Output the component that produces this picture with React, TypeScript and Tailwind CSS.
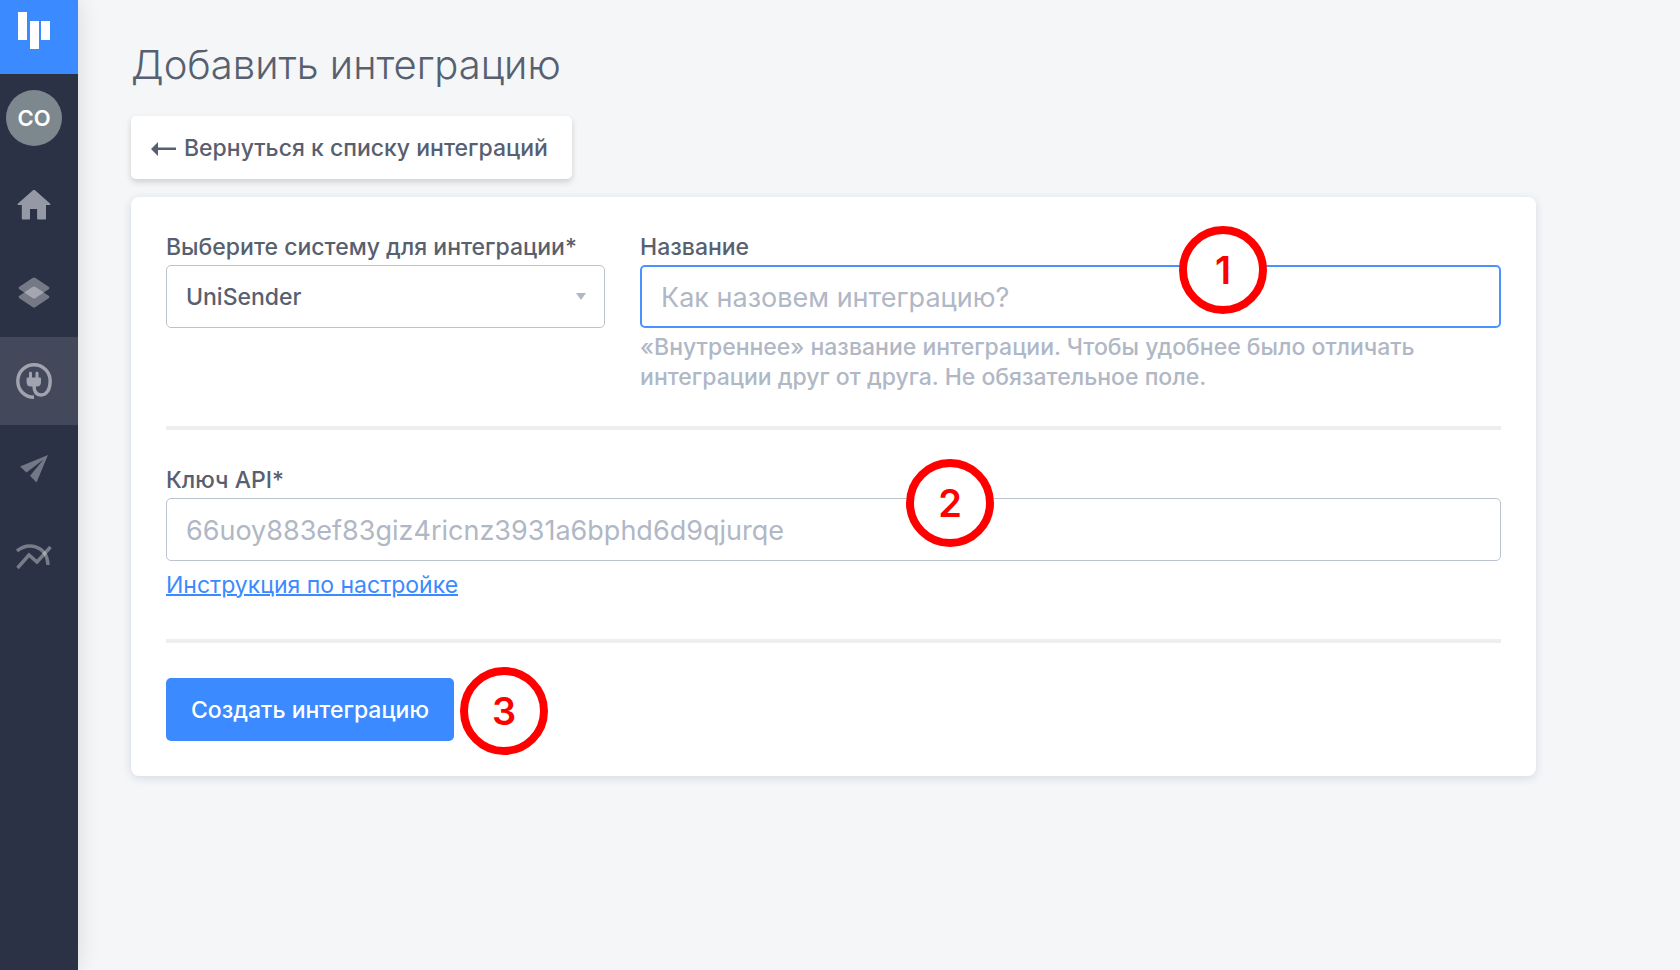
import { useState } from "react";
import type { ReactNode } from "react";

const navItems: { label: string; icon: ReactNode; active?: boolean }[] = [
    { label: "Главная", icon: <HomeIcon /> },
    { label: "Проекты", icon: <LayersIcon /> },
    { label: "Интеграции", icon: <PlugIcon />, active: true },
    { label: "Рассылки", icon: <PlaneIcon /> },
    { label: "Статистика", icon: <ChartIcon /> },
];

function HomeIcon() {
    return (
        <svg width="34" height="30" viewBox="0 0 34 30" fill="#9598a5">
            <path d="M15.4.7a2.3 2.3 0 0 1 3.2 0L33 13.6c.7.7.5 1.4-.5 1.4H29v13.2c0 1-.5 1.4-1.4 1.4h-6.2c-.9 0-1.3-.4-1.3-1.3V19H13v9.3c0 .9-.4 1.3-1.3 1.3H6.2c-.9 0-1.4-.4-1.4-1.4V15H1.5c-1 0-1.2-.7-.5-1.4z" />
        </svg>
    );
}

function LayersIcon() {
    return (
        <svg width="32" height="32" viewBox="0 0 32 32">
            <path d="M14.5 1Q16 0 17.5 1L31 10Q32 11 31 12L17.5 21Q16 22 14.5 21L1 12Q0 11 1 10Z" fill="#fff" fillOpacity=".35" />
            <path d="M14.5 10Q16 9 17.5 10L31 19Q32 20 31 21L17.5 30Q16 31 14.5 30L1 21Q0 20 1 19Z" fill="#fff" fillOpacity=".35" />
        </svg>
    );
}

function PlugIcon() {
    return (
        <svg width="36" height="36" viewBox="0 0 36 36" fill="none">
            <path
                d="M18 34.2C8.5 34.2 1.800 27 1.800 18S9 1.800 18 1.800 34.200 9 34.200 18c0 8.500-3.500 14-9.200 14-4.500 0-7-3-7-9.500"
                stroke="#a1a4ae"
                strokeWidth="3.4"
            />
            <path
                d="M13 10.2c0-1.900 3-1.900 3 0v4.300h3.500v-4.300c0-1.900 3-1.900 3 0v4.300h1.300c.8 0 1.200.4 1.200 1.200V19c0 3-1.500 4.500-4.200 4.500h-6c-2.700 0-4.200-1.500-4.200-4.500v-3.300c0-.8.4-1.200 1.200-1.200H13z"
                fill="#a1a4ae"
            />
        </svg>
    );
}

function PlaneIcon() {
    return (
        <svg width="28" height="28" viewBox="0 0 28 28" fill="#737888">
            <path d="M28 0 0 11.500 6.500 17.500 23.500 4.500 10 20.700 16.500 27.500z" />
        </svg>
    );
}

function ChartIcon() {
    return (
        <svg width="36" height="26" viewBox="0 0 36 26" fill="none" stroke="#fff" strokeOpacity=".36" strokeWidth="3.4">
            <path d="M1 7C12-2 31 1 32 21" />
            <path d="M1.5 24 13 11l8 7L34.5 3" />
        </svg>
    );
}

function Logo() {
    return (
        <svg width="33" height="37" viewBox="0 0 33 37" fill="#fff">
            <path d="M0 0h9v28H0zM12 9h9v28h-9zM23 9h9v19h-9z" />
        </svg>
    );
}

function StepMark({ value, className }: { value: number; className: string }) {
    return (
        <span
            className={`pointer-events-none absolute flex size-[88px] items-center justify-center rounded-full border-8 border-[#ff0000] bg-white text-[38px] font-semibold text-[#ff0000] ${className}`}
        >
            {value}
        </span>
    );
}

const labelClass = "block pb-[3px] leading-[30px] font-medium whitespace-nowrap";
const fieldClass =
    "block h-[63px] w-full rounded-[5px] bg-white px-[19px] pt-0.5 text-[#586070] placeholder:text-[#b0b7c5] focus:outline-none";

export default function App() {
    const [system, setSystem] = useState("UniSender");
    const [name, setName] = useState("");
    const [apiKey, setApiKey] = useState("");

    const handleSubmit = (e: React.FormEvent) => {
        e.preventDefault();
    };

    return (
        <div className="flex min-h-screen bg-[#f4f6f8] font-['Inter',sans-serif] text-[23px] text-[#586070]">
            <aside className="w-[78px] shrink-0 bg-[#2b3246] shadow-[0_0_22px_rgba(0,0,0,0.12)]">
                <a href="#" aria-label="На главную" className="flex h-[74px] bg-[#3b8aff] pt-3 pl-[18px]">
                    <Logo />
                </a>
                <div className="flex h-[88px] items-center pl-[6px]">
                    <button type="button" className="size-14 rounded-full bg-[#7d888e] text-[22px] font-semibold text-white">
                        CO
                    </button>
                </div>
                <nav className="-mt-px">
                    {navItems.map((item) => (
                        <a
                            key={item.label}
                            href="#"
                            aria-label={item.label}
                            className={`flex h-[88px] items-center justify-center pr-[10px] ${item.active ? "bg-[#43485b]" : ""}`}
                        >
                            {item.icon}
                        </a>
                    ))}
                </nav>
            </aside>

            <main className="min-w-0 flex-1 pt-[39px] pr-36 pl-[53px]">
                <h1 className="text-[40px] leading-[52px] font-light">Добавить интеграцию</h1>
                <a
                    href="#"
                    className="mt-[25px] flex h-[63px] w-fit items-center gap-2 rounded-[5px] bg-white pt-0.5 pr-6 pl-5 font-medium shadow-[0_3px_6px_rgba(0,0,0,0.16)]"
                >
                    <svg width="25" height="14" viewBox="0 0 25 14" fill="#586070">
                        <path d="M0 7 7 0v5.500h18v2.600H7V14z" />
                    </svg>
                    Вернуться к списку интеграций
                </a>

                <form
                    onSubmit={handleSubmit}
                    className="mt-[18px] rounded-lg bg-white p-[35px] shadow-[0_2px_8px_rgba(50,80,110,0.16)]"
                >
                    <div className="grid grid-cols-[51fr_100fr] gap-[35px]">
                        <div>
                            <label htmlFor="system" className={labelClass}>
                                Выберите систему для интеграции*
                            </label>
                            <div className="relative">
                                <select
                                    id="system"
                                    value={system}
                                    onChange={(e) => setSystem(e.target.value)}
                                    className={`${fieldClass} appearance-none border border-[#bcc3cf] font-medium`}
                                >
                                    <option>UniSender</option>
                                </select>
                                <svg
                                    className="pointer-events-none absolute top-7 right-[19px]"
                                    width="10"
                                    height="7"
                                    viewBox="0 0 10 7"
                                    fill="#b0b7c5"
                                >
                                    <path d="M0 0h10L5 7z" />
                                </svg>
                            </div>
                        </div>

                        <div className="min-w-0">
                            <label htmlFor="name" className={labelClass}>
                                Название
                            </label>
                            <div className="relative">
                                <input
                                    id="name"
                                    type="text"
                                    placeholder="Как назовем интеграцию?"
                                    value={name}
                                    onChange={(e) => setName(e.target.value)}
                                    className={`${fieldClass} border-2 border-[#4a93ff] text-[27px]`}
                                />
                                <StepMark value={1} className="-top-[39px] right-[234px]" />
                            </div>
                            <p className="mt-1 leading-[30px] font-medium text-[#b0b7c5]">
                                «Внутреннее» название интеграции. Чтобы удобнее было отличать интеграции друг от друга. Не
                                обязательное поле.
                            </p>
                        </div>
                    </div>

                    <hr className="mt-[34px] mb-[35px] border-t-4 border-[#eeeeee]" />

                    <label htmlFor="apiKey" className={labelClass}>
                        Ключ API*
                    </label>
                    <div className="relative">
                        <input
                            id="apiKey"
                            type="text"
                            placeholder="66uoy883ef83giz4ricnz3931a6bphd6d9qjurqe"
                            value={apiKey}
                            onChange={(e) => setApiKey(e.target.value)}
                            className={`${fieldClass} border border-[#bcc3cf] text-[27px]`}
                        />
                        <StepMark value={2} className="-top-[39px] right-[507px]" />
                    </div>
                    <a href="#" className="mt-[9px] block w-fit leading-[30px] text-[#3b8aff] underline decoration-2">
                        Инструкция по настройке
                    </a>

                    <hr className="mt-[39px] mb-[35px] border-t-4 border-[#eeeeee]" />

                    <div className="relative w-fit">
                        <button
                            type="submit"
                            className="block h-[63px] rounded-[5px] bg-[#3b8aff] px-[25px] pt-0.5 font-medium text-white"
                        >
                            Создать интеграцию
                        </button>
                        <StepMark value={3} className="-top-[11px] left-[calc(100%+6px)]" />
                    </div>
                </form>
            </main>
        </div>
    );
}
